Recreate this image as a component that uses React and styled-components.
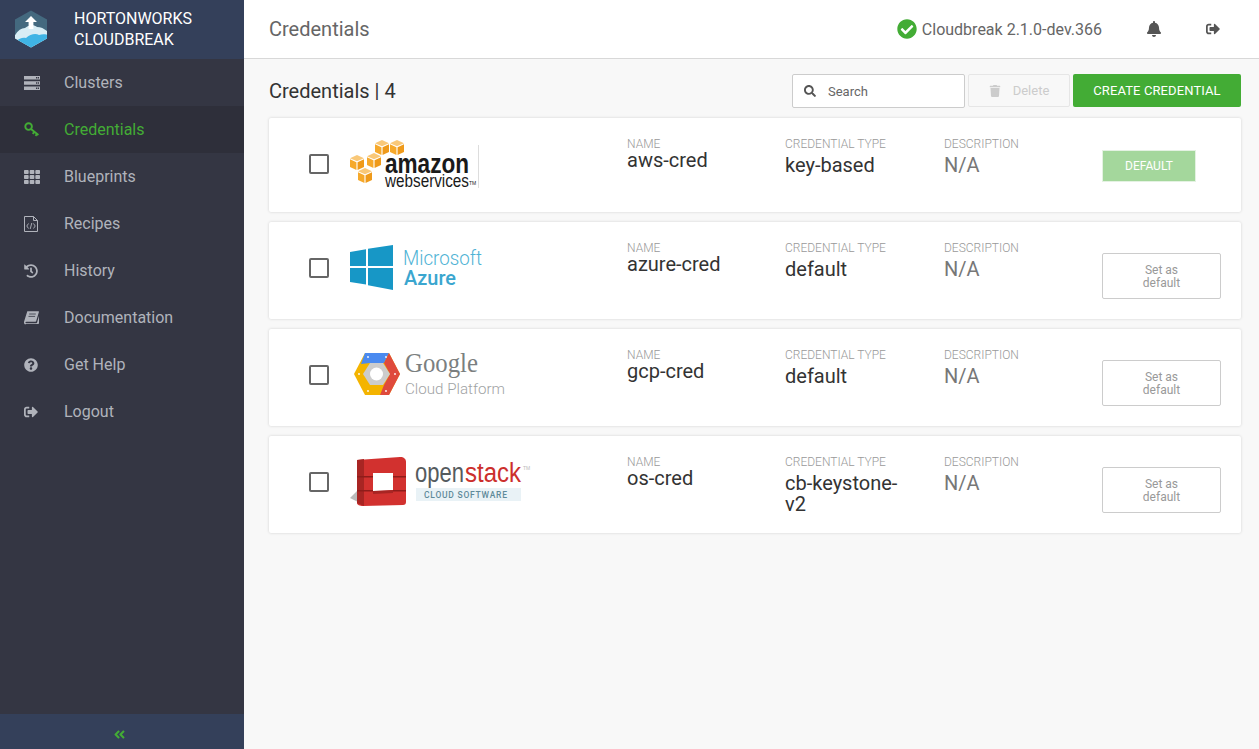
import React from 'react';
import styled, { createGlobalStyle } from 'styled-components';
import {
  FaTh, FaHistory, FaQuestionCircle, FaSignOutAlt,
  FaSearch, FaTrash, FaBell, FaCheckCircle, FaAngleDoubleLeft,
} from 'react-icons/fa';

const GlobalStyle = createGlobalStyle`
  html, body { margin: 0; padding: 0; height: 100%; }
  body { font-family: Roboto, "Liberation Sans", sans-serif; background: #f8f8f8; }
  * { box-sizing: border-box; }
`;

function ServerIcon() {
  return (
    <svg width="16" height="14" viewBox="0 0 16 14" fill="currentColor">
      <path d="M0 0h16v3.6H0zM0 5.2h16v3.6H0zM0 10.4h16V14H0z" />
      <path d="M12 1h1.4v1.4H12zM14 1h1v1.4h-1zM12 6.3h1.4v1.4H12zM14 6.3h1v1.4h-1zM12 11.5h1.4v1.4H12zM14 11.5h1v1.4h-1z" fill="#343643" />
    </svg>
  );
}

function KeyIcon() {
  return (
    <svg width="16" height="15" viewBox="0 0 16 15" fill="none" stroke="currentColor" strokeWidth="1.9">
      <circle cx="4.600" cy="4.600" r="3.300" />
      <path d="M7 7l7.400 6M10.400 9.800l-1.700 2M13 11.900l-1.500 1.900" />
    </svg>
  );
}

function RecipeIcon() {
  return (
    <svg width="14" height="16" viewBox="0 0 14 16" fill="none" stroke="currentColor">
      <path d="M.5.5h9l4 4v11H.5zM9.500.5v4h4" />
      <path d="M4.500 7.500L2.800 10l1.700 2.500M9.500 7.500l1.700 2.500-1.700 2.500M7.800 7l-1.600 6" strokeWidth="0.9" />
    </svg>
  );
}

function BookIcon() {
  return (
    <svg width="15" height="14" viewBox="0 0 15 14">
      <path d="M3.300.3h11.200c.4 0 .5.300.4.600l-2.800 9.400c-.1.300-.3.500-.7.500H2.500C1.800 10.800 1.400 11 1.400 11.500s.4.800 1 .8h9.900c.4 0 .6-.2.700-.5l2-6.800v7.100c0 .5-.3.900-.8.900H2.300C.9 13.800 0 12.800 0 11.500c0-.3 0-.6.100-.9z" fill="currentColor" />
      <path d="M5.200 3h6.600M4.500 5.400h6.600" stroke="#343643" strokeWidth="0.8" />
    </svg>
  );
}

function BrandLogo() {
  return (
    <svg width="34" height="38" viewBox="0 0 34 38">
      <defs>
        <clipPath id="hex"><path d="M17 0.500l16 9v19l-16 9-16-9v-19z" /></clipPath>
      </defs>
      <g clipPath="url(#hex)">
        <rect width="34" height="38" fill="#44697f" />
        <path d="M0 27c3-6 7-9 11-9 3-3 9-4 12-1 4 0 8 2 11 5v16H0z" fill="#d8edf5" />
        <path d="M0 33c5-5 9-6 12-5 4-4 10-5 13-3 3-1 6-1 9 0v13H0z" fill="#3fb4e5" />
      </g>
      <path d="M17 6l6 6h-3.600v7h-4.800v-7H11z" fill="#fff" />
    </svg>
  );
}

function AwsLogo() {
  const cube = (x, y) => (
    <g key={`${x}-${y}`} transform={`translate(${x} ${y}) scale(1.4 1.25)`}>
      <path d="M0 2.600L5 0l5 2.600L5 5z" fill="#f9c878" />
      <path d="M0 3.400L4.600 5.800V12L0 9.600z" fill="#f6a92b" />
      <path d="M10 3.400L5.400 5.800V12L10 9.600z" fill="#ef9a1a" />
    </g>
  );
  return (
    <svg width="130" height="56" viewBox="0 0 130 56">
      {[[25, 4], [40, 4], [0, 19], [17, 17], [8, 32]].map(([x, y]) => cube(x, y))}
      <text x="35" y="37" fontFamily="'Liberation Sans', sans-serif" fontWeight="700" fontSize="27" textLength="84" lengthAdjust="spacingAndGlyphs" fill="#1a1a1a">amazon</text>
      <text x="35" y="51" fontFamily="'Liberation Sans', sans-serif" fontSize="18" textLength="84" lengthAdjust="spacingAndGlyphs" fill="#1a1a1a">webservices</text>
      <text x="119" y="49" fontFamily="'Liberation Sans', sans-serif" fontSize="5" fill="#1a1a1a">TM</text>
      <path d="M128.500 9v43" stroke="#ddd" />
    </svg>
  );
}

function AzureLogo() {
  return (
    <svg width="140" height="54" viewBox="0 0 140 54">
      <path d="M0 12l16-2.800V26H0zM18 8.800L43 5v21H18zM0 28h16v16.500L0 42zM18 28h25v22l-25-4.800z" fill="#1797c6" />
      <text x="53" y="25" fontFamily="Roboto, sans-serif" fontWeight="300" fontSize="20" textLength="79" lengthAdjust="spacingAndGlyphs" fill="#4fb3d5">Microsoft</text>
      <text x="54" y="45" fontFamily="Roboto, sans-serif" fontWeight="500" fontSize="21" textLength="52" lengthAdjust="spacingAndGlyphs" fill="#3ba6cf">Azure</text>
    </svg>
  );
}

function GoogleLogo() {
  return (
    <svg width="158" height="54" viewBox="0 0 158 54">
      <path d="M4 27L15 6h24l11 21-11 21H15z" fill="#f4b400" />
      <path d="M15 6h24l-5 10H20l-7 11H4z" fill="#4a8af0" opacity="0" />
      <path d="M15 6h24l-5 10H20l-9 1z" fill="#4a8af0" />
      <path d="M39 6l11 21-11 21h-9l4-10 6-11-6-11z" fill="#df4a3c" />
      <path d="M13 27l7-11h13l7 11-7 11H20z" fill="#cccccc" />
      <circle cx="26.500" cy="27" r="6.500" fill="#fff" />
      <circle cx="18" cy="10" r="0.900" fill="#fff" />
      <circle cx="36" cy="10" r="0.900" fill="#fff" />
      <circle cx="45" cy="27" r="0.900" fill="#fff" />
      <circle cx="9" cy="27" r="0.900" fill="#fff" />
      <circle cx="18" cy="44" r="0.900" fill="#fff" />
      <circle cx="36" cy="44" r="0.900" fill="#fff" />
      <text x="55" y="25" fontFamily="'Liberation Serif', serif" fontSize="27" textLength="73" lengthAdjust="spacingAndGlyphs" fill="#7b7f80">Google</text>
      <text x="55" y="47" fontFamily="Roboto, sans-serif" fontWeight="300" fontSize="15.500" textLength="100" lengthAdjust="spacingAndGlyphs" fill="#9fa3a4">Cloud Platform</text>
    </svg>
  );
}

function OpenstackLogo() {
  return (
    <svg width="184" height="56" viewBox="0 0 184 56">
      <path d="M0 44l8-8v12z" fill="#bbb" />
      <path d="M7 6l43-3c4 0 6 2 6 5v40c0 2-1 3-3 3l-40 1c-3 0-6-1-6-3z" fill="#d2312f" />
      <path d="M7 6l7-1v47l-7-3z" fill="#a82523" />
      <path d="M7 22h16v1.500H7zM7 36h16v1.500H7zM43 22h13v1.500H43zM43 36h13v1.500H43z" fill="#8f1c1a" />
      <path d="M23 19h20v17l-20 1z" fill="#fff" />
      <path d="M23 19h4v14h16v3l-20 1z" fill="#fff" />
      <path d="M23 37l20-1v3l-20 1z" fill="#a82523" />
      <text x="65" y="28" fontFamily="'Liberation Sans', sans-serif" fontSize="27" textLength="49" lengthAdjust="spacingAndGlyphs" fill="#555b5e">open</text>
      <text x="115" y="28" fontFamily="'Liberation Sans', sans-serif" fontSize="27" textLength="56" lengthAdjust="spacingAndGlyphs" fill="#cc2f2c">stack</text>
      <text x="173" y="16" fontFamily="'Liberation Sans', sans-serif" fontSize="5" fill="#bbb">TM</text>
      <rect x="66" y="34" width="105" height="13" fill="#e9f2f6" />
      <text x="74" y="43.500" fontFamily="Roboto, sans-serif" fontWeight="500" fontSize="8.500" textLength="83" fill="#5f8a9a">CLOUD SOFTWARE</text>
    </svg>
  );
}

const NAV_ITEMS = [
  { label: 'Clusters', icon: <ServerIcon /> },
  { label: 'Credentials', icon: <KeyIcon />, active: true },
  { label: 'Blueprints', icon: <FaTh size={16} /> },
  { label: 'Recipes', icon: <RecipeIcon /> },
  { label: 'History', icon: <FaHistory size={14} /> },
  { label: 'Documentation', icon: <BookIcon /> },
  { label: 'Get Help', icon: <FaQuestionCircle size={14} /> },
  { label: 'Logout', icon: <FaSignOutAlt size={14} /> },
];

const CREDENTIALS = [
  { name: 'aws-cred', type: 'key-based', logo: <AwsLogo />, isDefault: true },
  { name: 'azure-cred', type: 'default', logo: <AzureLogo /> },
  { name: 'gcp-cred', type: 'default', logo: <GoogleLogo /> },
  { name: 'os-cred', type: 'cb-keystone-v2', logo: <OpenstackLogo /> },
];

export default function App() {
  return (
    <Page>
      <GlobalStyle />
      <Sidebar>
        <Brand>
          <BrandLogo />
          <BrandName>HORTONWORKS<br />CLOUDBREAK</BrandName>
        </Brand>
        <Nav>
          {NAV_ITEMS.map((item) => (
            <NavItem key={item.label} $active={item.active}>
              <NavIcon>{item.icon}</NavIcon>
              {item.label}
            </NavItem>
          ))}
        </Nav>
        <Collapse><FaAngleDoubleLeft size={13} /></Collapse>
      </Sidebar>

      <Main>
        <Header>
          <HeaderTitle>Credentials</HeaderTitle>
          <Status>
            <FaCheckCircle size={20} color="#43ac35" />
            Cloudbreak 2.1.0-dev.366
          </Status>
          <HeaderIcons>
            <FaBell size={16} />
            <FaSignOutAlt size={14} />
          </HeaderIcons>
        </Header>

        <Content>
          <Toolbar>
            <ListTitle>Credentials | 4</ListTitle>
            <SearchBox>
              <FaSearch size={12} color="#555" />
              <SearchInput placeholder="Search" />
            </SearchBox>
            <DeleteButton><FaTrash size={12} /> Delete</DeleteButton>
            <CreateButton>CREATE CREDENTIAL</CreateButton>
          </Toolbar>

          <CardList>
            {CREDENTIALS.map((cred) => (
              <Card key={cred.name} $compact={cred.isDefault}>
                <Checkbox />
                <LogoCell>{cred.logo}</LogoCell>
                <Field>
                  <Label>NAME</Label>
                  <NameValue>{cred.name}</NameValue>
                </Field>
                <Field>
                  <Label>CREDENTIAL TYPE</Label>
                  <TypeValue>{cred.type}</TypeValue>
                </Field>
                <Field>
                  <Label>DESCRIPTION</Label>
                  <TypeValue $muted>N/A</TypeValue>
                </Field>
                {cred.isDefault
                  ? <DefaultBadge>DEFAULT</DefaultBadge>
                  : <SetDefaultButton>Set as<br />default</SetDefaultButton>}
              </Card>
            ))}
          </CardList>
        </Content>
      </Main>
    </Page>
  );
}

const Page = styled.div`
  display: flex;
  height: 100vh;
  overflow: hidden;
`;

const Sidebar = styled.aside`
  width: 244px;
  flex: none;
  display: flex;
  flex-direction: column;
  background: #343643;
`;

const Brand = styled.div`
  height: 59px;
  flex: none;
  display: flex;
  align-items: center;
  gap: 26px;
  padding: 0 0 2px 14px;
  background: #34405a;
`;

const BrandName = styled.div`
  color: #fff;
  font-size: 16px;
  line-height: 21px;
`;

const Nav = styled.nav`
  flex: 1;
`;

const NavItem = styled.a`
  display: flex;
  align-items: center;
  height: 47px;
  font-size: 16px;
  color: ${(p) => (p.$active ? '#43ac35' : '#b0b3bb')};
  background: ${(p) => (p.$active ? '#2e2f3a' : 'transparent')};
`;

const NavIcon = styled.span`
  width: 64px;
  padding-left: 24px;
  display: flex;
  align-items: center;
`;

const Collapse = styled.div`
  height: 35px;
  flex: none;
  display: flex;
  align-items: center;
  justify-content: center;
  padding: 5px 6px 0 0;
  color: #43ac35;
  background: #34405a;
`;

const Main = styled.main`
  flex: 1;
  min-width: 0;
  display: flex;
  flex-direction: column;
`;

const Header = styled.header`
  height: 59px;
  flex: none;
  display: flex;
  align-items: center;
  padding: 0 39px 0 25px;
  background: #fff;
  border-bottom: 1px solid #d8d8d8;
`;

const HeaderTitle = styled.div`
  flex: 1;
  font-size: 20px;
  color: #666;
`;

const Status = styled.div`
  display: flex;
  align-items: center;
  gap: 5px;
  font-size: 16px;
  color: #666;
`;

const HeaderIcons = styled.div`
  display: flex;
  align-items: center;
  gap: 44px;
  margin-left: 44px;
  color: #555;
`;

const Content = styled.div`
  flex: 1;
  padding: 15px 18px 0 25px;
`;

const Toolbar = styled.div`
  display: flex;
  align-items: flex-start;
  gap: 3px;
  height: 44px;
`;

const ListTitle = styled.div`
  flex: 1;
  font-size: 20px;
  line-height: 34px;
  color: #333;
`;

const SearchBox = styled.label`
  width: 173px;
  height: 34px;
  display: flex;
  align-items: center;
  gap: 12px;
  padding-left: 11px;
  background: #fff;
  border: 1px solid #ccc;
  border-radius: 2px;
`;

const SearchInput = styled.input`
  width: 120px;
  border: none;
  outline: none;
  padding: 0;
  font: 13px Roboto, sans-serif;
  &::placeholder { color: #666; opacity: 1; }
`;

const DeleteButton = styled.button`
  width: 102px;
  height: 33px;
  display: flex;
  align-items: center;
  justify-content: center;
  gap: 12px;
  padding: 0;
  background: #f8f8f8;
  border: 1px solid #e6e6e6;
  border-radius: 2px;
  color: #ccc;
  font: 13px Roboto, sans-serif;
`;

const CreateButton = styled.button`
  width: 168px;
  height: 33px;
  padding: 0;
  background: #43ac35;
  border: none;
  border-radius: 2px;
  color: #fff;
  font: 13px Roboto, sans-serif;
  letter-spacing: 0.1px;
`;

const CardList = styled.div`
  display: flex;
  flex-direction: column;
  gap: 10px;
`;

const Card = styled.article`
  height: ${(p) => (p.$compact ? 94 : 97)}px;
  display: grid;
  grid-template-columns: 20px 298px 158px 159px 158px auto;
  align-items: start;
  padding-left: 40px;
  background: #fff;
  border-radius: 2px;
  box-shadow: 0 0 3px rgba(0, 0, 0, 0.16);
`;

const Checkbox = styled.span`
  width: 20px;
  height: 20px;
  margin-top: 36px;
  border: 2px solid #666;
  border-radius: 2px;
`;

const LogoCell = styled.div`
  display: flex;
  padding: 18px 0 0 21px;
  svg { display: block; }
`;

const Field = styled.div`
  padding-top: 20px;
`;

const Label = styled.div`
  font-size: 12px;
  line-height: 13px;
  color: #999;
  font-weight: 300;
`;

const NameValue = styled.div`
  font-size: 20px;
  line-height: 21px;
  color: #333;
  margin-top: -1px;
`;

const TypeValue = styled.div`
  margin-top: 4px;
  width: 125px;
  font-size: 20px;
  line-height: 21px;
  color: ${(p) => (p.$muted ? '#777' : '#333')};
`;

const DefaultBadge = styled.div`
  width: 94px;
  height: 32px;
  margin-top: 32px;
  display: flex;
  align-items: center;
  justify-content: center;
  background: #a4d79c;
  border: 1px solid #e4f2e2;
  color: #fff;
  font-size: 12px;
`;

const SetDefaultButton = styled.button`
  width: 119px;
  height: 46px;
  margin-top: 31px;
  padding: 2px 0 0;
  background: #fff;
  border: 1px solid #ccc;
  border-radius: 2px;
  color: #999;
  font: 12px/13px Roboto, sans-serif;
`;
